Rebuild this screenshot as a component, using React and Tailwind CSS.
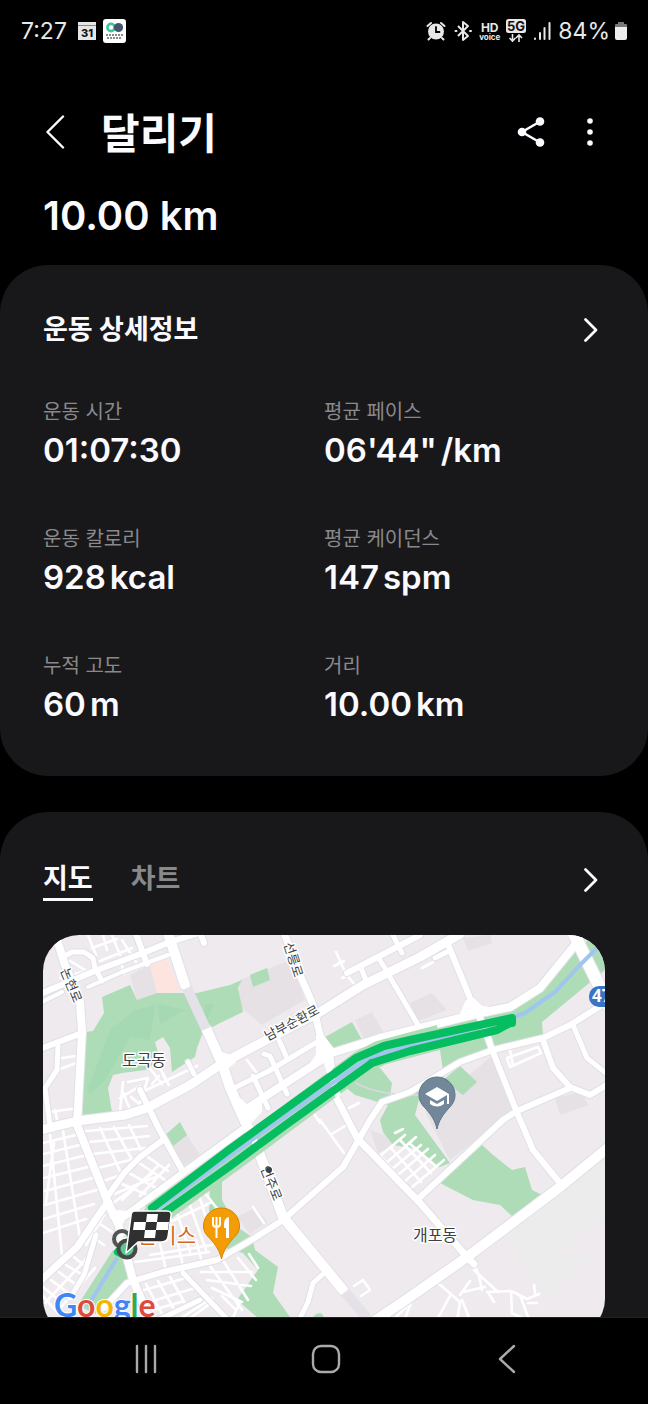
import { useState } from 'react';

const STATS = [
  { label: '운동 시간', value: '01:07:30', unit: '' },
  { label: '평균 페이스', value: '06\'44"', unit: '/km' },
  { label: '운동 칼로리', value: '928', unit: 'kcal' },
  { label: '평균 케이던스', value: '147', unit: 'spm' },
  { label: '누적 고도', value: '60', unit: 'm' },
  { label: '거리', value: '10.00', unit: 'km' },
];

// [stroke width, points]
const ROADS = [
  [8, '54,930 65,965 80,1002 82,1032 77,1125 107,1200 118,1223 133,1280 150,1320'],
  [6, '40,994 97,970 143,953 170,942 205,931'],
  [5, '63,957 72,952 84,952 93,958 95,968 102,981'],
  [6, '136,934 147,964'],
  [4, '88,987 122,972 168,955'],
  [4, '40,1003 62,992'],
  [10, '167,930 185,985'],
  [10, '207,1030 223,1066 229,1085 242,1115 257,1147 283,1217 343,1290'],
  [9, '40,1130 77,1121 125,1115 147,1108 190,1085 223,1063 270,1038 320,1012 363,985 420,957 460,934'],
  [6, '347,973 420,935'],
  [5, '361,968 366,980'],
  [5, '378,957 386,970'],
  [5, '393,935 402,953'],
  [7, '283,930 300,975 313,1005 320,1035 330,1058 335,1095 357,1138 420,1203 467,1257 474,1264'],
  [8, '242,1112 275,1090 303,1072 332,1053 380,1038 420,1028 460,1018 490,1011 510,1007 540,988 575,945'],
  [7, '242,1130 183,1173 125,1216 113,1216'],
  [6, '107,1197 125,1172 140,1157 163,1140'],
  [6, '140,1090 158,1127 182,1170'],
  [7, '107,1203 77,1247 40,1281'],
  [5, '96,1235 84,1275 70,1298'],
  [6, '104,1308 127,1283 163,1272 217,1260 253,1239 283,1220 343,1167 370,1120 382,1102 410,1092 460,1062 493,1050 543,1038 570,1025 610,1000'],
  [6, '447,942 470,998 483,1025 493,1052 518,1115 533,1150 560,1183'],
  [6, '543,1040 553,1068 570,1087 590,1095 610,1083'],
  [6, '570,1088 517,1111 503,1120 417,1200'],
  [5, '573,1025 587,1058 612,1078'],
  [12, '572,930 610,1008'],
  [10, '610,1146 560,1187 467,1257 410,1297 373,1322'],
  [5, '322,1275 313,1283 308,1302 298,1322'],
  [5, '183,1273 230,1322'],
  [5, '158,1320 200,1300'],
  [5, '279,1040 286,1056'],
  [5, '234,1088 267,1072 317,1042'],
  [5, '264,1054 270,1056 287,1094'],
  [5, '253,1076 268,1108'],
  [5, '387,972 418,1025'],
  [6, '40,1049 82,1033'],
  [5, '58,1046 57,1070 45,1088 50,1125'],
  [6, '200,932 204,943'],
  [5, '188,1062 194,1074'],
  [5, '435,958 447,952'],
];

const LANES = [
  // north west blocks
  'M88 935l8 20M103 935l4 15M92 948l25-9M100 961l32-13M112 935l8 20M70 961l15 9M60 978l30-8M122 940l14 22M121 962l3 12',
  'M57 1070l22 -8M49 1112l30-4M55 1110l3 14M62 1058l20-3',
  // below the park
  'M123 1082l-3 30M128 1082l20-4M120 1098l20-12M130 1110l-7-18M148 1078l-10 32M148 1066l14 18M152 1084l7-8M140 1093l57-27M163 1075l6 10M158 1065l8 14M131 1097l12 10',
  // left grid, around the boulevard
  'M43 1143l37-9M43 1154l41-10M43 1166l44-11M44 1178l48-12M45 1191l51-14M45 1205l55-16M44 1219l50-15M43 1233l43-14M50 1135l12 120M63 1131l17 107M54 1142l-8 60',
  'M86 1131l61-5M89 1142l60-6M93 1154l52-6M98 1168l36-9M103 1181l18-6M100 1128l20 43M114 1127l17 31M129 1125l12 25',
  'M114 1194l44-18M120 1183l34 15M129 1173l29 16M139 1163l26 17M148 1157l20 14M122 1200l36-34M112 1204l40-30M140 1196l29-31',
  'M43 1287l17 14M51 1280l20 15M59 1272l20 15M66 1265l15 9M74 1257l12 10M45 1303l45-48M57 1312l38-44M43 1296l15 17',
  'M104 1215l-18 30M97 1222l15 10M89 1234l15 11',
  // around the restaurant pin
  'M162 1216l38-26M170 1222l42-20M176 1210l14 42M188 1200l18 50M198 1192l16 52M150 1255l62-10M135 1262l74-10M160 1244l6 26M178 1244l6 26M196 1240l6 22M205 1193l14 18',
  'M137 1292l49-14M143 1304l52-16M146 1284l16 30M158 1281l17 30M170 1277l17 30M150 1311l34-10M178 1320l34-22M188 1320l20-15',
  'M201 1272l51 0M207 1280l44 6M212 1288l30 14M222 1296l14 14M210 1266l32 44M224 1262l24 38M238 1258l18 22M249 1254l9 14M232 1320l8-18',
  // east side of the avenue
  'M380 1156l25-21M386 1163l26-22M392 1169l29-24M398 1175l30-26M404 1182l31-27M411 1188l33-28M382 1158l31 34M391 1148l30 34M400 1140l31 33M409 1143l28 24M395 1133l8-4M407 1145l9-8',
  'M354 1286l9-6 7 10-9 6M253 1207l11 16M320 1120l24 33M332 1134l13-8M240 1083l12-5M247 1060l9 12',
  'M438 1283l22 19-3 20M451 1294l-14 26M460 1295l10-14M463 1292l22-5M474 1263l5 13 3 14M474 1270l24 22M487 1292l24-1 16 8 12-5M511 1291l1 22 10 5M520 1295l8 22M488 1292l6 10M528 1303l9 0M534 1285l1 8M462 1300l8 20',
  'M422 968l11-6M336 952l10 22 8 10M334 966l10-5M342 978l8-4M507 1058l31-11 3 6-31 14zM510 1050l3 16M310 1107l10 16M349 1108l10-5M395 1318l12-12M412 1300l-6 16',
];

const LETTERS = [
  ['G', '#4285f4'],
  ['o', '#dd4b3e'],
  ['o', '#f4b400'],
  ['g', '#4285f4'],
  ['l', '#34a853'],
  ['e', '#dd4b3e'],
];

function Chevron({ className }) {
  return (
    <svg viewBox="0 0 16 26" fill="none" stroke="currentColor" strokeWidth="2.8" strokeLinecap="round" strokeLinejoin="round" className={className}>
      <path d="M2.5 2.5 13 13 2.5 23.5" />
    </svg>
  );
}

function StatusBar() {
  return (
    <div className="flex h-[62px] items-center justify-between pl-[21px] pr-5 text-[#e8e8e8]">
      <div className="flex items-center gap-2">
        <span className="text-[23px]">7:27</span>
        <svg width="22" height="20" viewBox="0 0 22 20" className="ml-px">
          <path fill="#e6e6e6" d="M2 1h18v3H2zM2 5h18v14H2z" />
          <path fill="#888" d="M2 4h18v1H2z" />
          <text x="11" y="16" textAnchor="middle" fontSize="11" fontWeight="800" fill="#111">31</text>
        </svg>
        <svg width="24" height="24" viewBox="0 0 24 24" className="-ml-1">
          <rect x="1" width="23" height="24" rx="3" fill="#fff" />
          <circle cx="9" cy="8.500" r="3.600" fill="none" stroke="#3cc79a" strokeWidth="2.600" />
          <circle cx="16.500" cy="8.500" r="4.600" fill="#44566a" />
          <path stroke="#666" strokeWidth="1.500" strokeDasharray="2 1" d="M4 16h17M5 19h15" />
        </svg>
      </div>
      <div className="flex items-center gap-1">
        <svg width="22" height="22" viewBox="0 0 22 22" fill="none" stroke="currentColor" strokeWidth="2" strokeLinecap="round">
          <circle cx="11" cy="11.500" r="8" fill="currentColor" stroke="none" />
          <path d="M2.500 6 6 3M19.500 6 16 3M5 18l-1.500 1.500M17 18l1.500 1.500" />
          <path stroke="#000" strokeWidth="1.800" d="M11 7v5h3.500" />
        </svg>
        <svg width="22" height="22" viewBox="0 0 22 22" fill="none" stroke="currentColor" strokeWidth="2" strokeLinejoin="round" className="mx-px">
          <path d="m6 6 10 10-5 4V2l5 4L6 16" />
          <path strokeLinecap="round" d="M3.500 11h1M18 11h1" />
        </svg>
        <span className="flex flex-col items-center font-bold">
          <span className="text-[12px] leading-[11px]">HD</span>
          <span className="text-[8px] leading-[8px]">voice</span>
        </span>
        <svg width="22" height="24" viewBox="0 0 22 24" fill="none" stroke="currentColor" className="mx-px">
          <rect x="1" y="0" width="20" height="14" rx="2.500" fill="currentColor" stroke="none" />
          <text x="11" y="12" textAnchor="middle" fontSize="13" fontWeight="700" fill="#111" stroke="none">5G</text>
          <path strokeWidth="1.600" d="M7.500 15v7M4.500 19l3 3 3-3M14 23v-7M11 19l3-3 3 3" />
        </svg>
        <svg width="20" height="20" viewBox="0 0 20 20" stroke="currentColor" strokeWidth="2" strokeLinecap="round">
          <path d="M3 18v-.500M8 18v-6M12.500 18V7M17.500 18V2" />
        </svg>
        <span className="ml-0.5 text-[23px]">84%</span>
        <svg width="14" height="20" viewBox="0 0 14 20">
          <path fill="#777" d="M4 1h6v2h2q1 0 1 1v3H1V4q0-1 1-1h2z" />
          <path fill="#eee" d="M1 6h12v11q0 2-2 2H3q-2 0-2-2z" />
        </svg>
      </div>
    </div>
  );
}

function RouteMap() {
  return (
    <svg viewBox="43 935 562 400" className="block w-full rounded-[36px]" role="img" aria-label="지도">
      <rect x="43" y="935" width="562" height="400" fill="#eeeaee" />

      <g fill="#e5e1e5">
        <path d="M130 975 150 965 157 993 137 1000ZM240 980 290 960 305 1000 262 1025 238 1005ZM355 1020 372 1012 385 1035 365 1042ZM463 938 490 935 492 943 468 951ZM410 1003 432 993 447 1010 415 1022ZM425 1112 493 1055 515 1110 450 1160ZM555 1098 582 1092 588 1105 560 1115ZM237 1217 255 1208 268 1222 250 1234ZM172 1147 187 1135 200 1155 184 1165ZM370 1130 385 1135 395 1145 378 1153Z" />
        <path fill="#ececec" d="M508 1240 560 1180 605 1150V1215L560 1255 590 1255 545 1300Z" />
      </g>
      <path fill="#fde4df" d="m150 965 17-8 13 35-23 1z" />
      <g fill="#addcb7">
        <path d="M85 1032 93 1031 104 1013 102 997 130 985 137 1000 157 993 197 993 230 985 242 980 238 988 243 1012 220 1023 203 1032 197 1048 195 1057 172 1072 170 1048 163 1037 155 1042 160 1060 145 1070 122 1073 113 1075 108 1088 112 1113 82 1118Z" />
        <path d="m250 975 17-7 3 12-17 7zM325 1037 352 1022 362 1040 343 1051 333 1048Z" />
        <path d="M575 947 600 935 605 970 565 1003 542 1022 543 1035 493 1048 460 1062 443 1070 440 1050 410 1053V1033L513 1008 541 990Z" />
        <path d="M343 1085 372 1066 380 1068 392 1083 390 1096 422 1088 415 1115 450 1163 437 1168 413 1148 393 1145 383 1132 380 1120 388 1105 355 1095Z" />
        <path d="m460 1066 17 16-14 13-20-15zM482 1145 493 1155 512 1170 525 1167 532 1190 542 1195 555 1185 513 1217 500 1205 473 1200 440 1183Z" />
        <path d="m163 1137 17-15 7 13-15 12zM210 1190 222 1180 222 1200 237 1227 252 1237 255 1250 278 1267 273 1293 290 1317 257 1317 237 1300 258 1270 243 1253 215 1245 209 1210Z" />
        <path d="M113 1250 128 1250 128 1278 95 1314 78 1305ZM316 1314q8-3 8 6h-14z" />
      </g>
      <path fill="#a4d9b4" d="M88 1090 110 1030 135 1010 155 1005 150 1040 130 1037 105 1080 90 1095ZM158 1004 185 1010 160 1024ZM205 1005 214 1003 205 1025Z" />

      <g fill="none" stroke="#fff" strokeWidth="2.600" strokeLinecap="round" strokeLinejoin="round">
        {LANES.map((d) => (
          <path key={d} d={d} />
        ))}
      </g>
      <path stroke="#d8d8e0" strokeWidth="2" fill="none" d="M350 1080q20 12 45 14l25 1" />

      {/* casing first, so that the junctions stay open */}
      <g fill="none" stroke="#e0e0e7" strokeLinecap="round" strokeLinejoin="round">
        {ROADS.map(([w, points]) => (
          <polyline key={points} points={points} strokeWidth={w + 2} />
        ))}
      </g>
      <g fill="none" stroke="#fff" strokeLinecap="round" strokeLinejoin="round">
        {ROADS.map(([w, points]) => (
          <polyline key={points} points={points} strokeWidth={w} />
        ))}
      </g>
      <path fill="#fff" d="M316 1035 325 1037 336 1051 320 1062 303 1072 316 1055ZM466 1000 474 998 482 1006 500 1008 470 1016 458 1018ZM222 1052 234 1056 236 1062 224 1072ZM237 1095 252 1109 262 1103 262 1112 245 1130ZM103 1203 115 1210 130 1211 118 1232Z" />
      <path stroke="#e5e1e8" strokeWidth="10" fill="none" d="m187 988 19 41M345 1292l22 26" />

      <path stroke="#addcb7" strokeWidth="25" fill="none" strokeLinejoin="round" d="M153 1216 235 1157 361 1063 380 1053 440 1037" />
      <path fill="#addcb7" d="M147 1206 122 1238 140 1234 164 1216Z" />
      <g fill="none" stroke="#fff" strokeWidth="6">
        <path d="m476 1008 14 34M246 1120l12 30M326 1060l12 36" />
      </g>
      <path stroke="#a0c5ee" strokeWidth="4" fill="none" strokeLinejoin="round" d="M602 943 580 965 555 992 525 1013 500 1022 410 1046 380 1054 361 1063 260 1134 156 1210M117 1258l-29 48" />
      <g fill="none" stroke="#07bd62" strokeWidth="8" strokeLinejoin="round" strokeLinecap="round">
        <path d="M512 1018 410 1040 384 1046 356 1058 263 1125 230 1149 152 1208M512 1022 497 1030 410 1051 372 1063 287 1124 230 1166 158 1217M512 1018v5M118 1252l4 2" />
      </g>
      <path fill="#07bd62" d="m366 1064 8 3-4-8z" />

      <g fontFamily="Noto Sans CJK KR, sans-serif" fill="#3c4043" stroke="#fff" strokeWidth="3" strokeLinejoin="round" paintOrder="stroke" textAnchor="middle">
        <g fontSize="16">
          <text x="144" y="1066">도곡동</text>
          <text x="435" y="1241">개포동</text>
        </g>
        <g fontSize="13">
          <text transform="translate(67 987) rotate(68)">논현로</text>
          <text transform="translate(289 961) rotate(72)">선릉로</text>
          <text transform="translate(294 1027) rotate(-28)">남부순환로</text>
          <text transform="translate(267 1185) rotate(68)">언주로</text>
        </g>
        <text x="196" y="1243" textAnchor="end" fontSize="21" fill="#d2691e">은이스</text>
      </g>
      <circle cx="269" cy="1170" r="3" fill="#3c4043" />

      {/* school pin */}
      <path fill="#72889a" stroke="#5f7687" strokeWidth="1" d="M437 1129c-2-9-6-14-11-20-4-4-7-8-7-14a18 18 0 0 1 36 0c0 6-3 10-7 14-5 6-9 11-11 20z" />
      <path fill="#fff" d="m425 1094 12-7 12 7v10h-2v-9l-10 6zM430 1100l7 4 7-4v4q-7 5-14 0z" />

      {/* restaurant pin */}
      <path fill="#f39c05" stroke="#d98200" strokeWidth="1" d="M221.500 1259c-2-9-6-14-11-20-4-4-7-7-7-13a18 18 0 0 1 36 0c0 6-3 9-7 13-5 6-9 11-11 20z" />
      <path fill="none" stroke="#fff" strokeWidth="2" d="M213 1217v7q0 3 3.500 3t3.500-3v-7M216.500 1217v21" />
      <path fill="#fff" d="M224 1224q0-6 5-7v21h-3v-10h-2z" />

      {/* start and finish */}
      <circle cx="122" cy="1239" r="8" fill="#fff" fillOpacity=".5" stroke="#555" strokeWidth="4" />
      <circle cx="127" cy="1249" r="8.500" fill="#5cc894" stroke="#484848" strokeWidth="4" />
      <path fill="#303030" stroke="#fff" strokeWidth="1.500" strokeLinejoin="round" d="M135 1211h32q5 0 4 5l-3 21q-1 5-6 5h-24l-12 11 5-37q0-5 4-5z" />
      <path fill="#fff" d="M147 1214h11l-1 8h-11zM134 1222h12l-1 8h-12zM157 1222h12l-1 8h-12zM145 1230h11l-1 8h-11z" />

      <rect x="589" y="986" width="30" height="21" rx="10" fill="#3a75c4" />
      <text x="592" y="1002" fontFamily="Open Sans, sans-serif" fontSize="17" fontWeight="700" fill="#fff">47</text>

      <text x="54" y="1317" fontFamily="Lato, sans-serif" fontSize="32" fontWeight="700" stroke="#fff" strokeWidth="2" paintOrder="stroke">
        {LETTERS.map(([letter, color], i) => (
          <tspan key={i} fill={color}>{letter}</tspan>
        ))}
      </text>
    </svg>
  );
}

export default function App() {
  const [tab, setTab] = useState('지도');

  return (
    <div className="flex h-dvh flex-col bg-black font-['Inter','Noto_Sans_CJK_KR',sans-serif] text-[#fafaff]">
      <main className="min-h-0 flex-1 overflow-y-auto [scrollbar-width:none]">
        <StatusBar />

        <header className="px-[43px] pt-10">
          <div className="flex h-[60px] items-center">
            <button aria-label="뒤로" className="mr-9 pl-0.5">
              <svg width="20" height="34" viewBox="0 0 20 34" fill="none" stroke="currentColor" strokeWidth="2.400" strokeLinecap="round" strokeLinejoin="round">
                <path d="M18 1.500 2.500 17 18 32.500" />
              </svg>
            </button>
            <h1 className="pt-1 text-[42px] font-bold leading-[60px]">달리기</h1>
            <button aria-label="공유" className="ml-auto">
              <svg width="28" height="32" viewBox="0 0 28 32" fill="currentColor">
                <path fill="none" stroke="currentColor" strokeWidth="2.500" d="M23 5.500 5 16l18 10.500" />
                <circle cx="5" cy="16" r="4.300" />
                <circle cx="23" cy="5.500" r="4.300" />
                <circle cx="23" cy="26.500" r="4.300" />
              </svg>
            </button>
            <button aria-label="더보기" className="ml-[38px] mr-2">
              <svg width="14" height="32" viewBox="0 0 14 32" fill="currentColor">
                <circle cx="7" cy="5" r="2.800" />
                <circle cx="7" cy="16" r="2.800" />
                <circle cx="7" cy="27" r="2.800" />
              </svg>
            </button>
          </div>
          <p className="mt-6 text-[40px] font-semibold leading-[60px]">10.00 km</p>
        </header>

        <section className="mt-[19px] rounded-[48px] bg-[#18181a] px-[43px] pb-[50px] pt-[45px]">
          <div className="flex items-center justify-between">
            <h2 className="text-[27px] font-bold leading-10">운동 상세정보</h2>
            <button aria-label="운동 상세정보 보기" className="pr-1.5">
              <Chevron className="h-[26px] w-4" />
            </button>
          </div>
          <dl className="mt-12 grid grid-cols-2 gap-y-[53px]">
            {STATS.map((s) => (
              <div key={s.label}>
                <dt className="text-xl leading-7 text-[#89898c]">{s.label}</dt>
                <dd className="mt-0.5 flex gap-1 text-[33px] font-semibold leading-[44px]">
                  <span>{s.value}</span>
                  {s.unit && <span>{s.unit}</span>}
                </dd>
              </div>
            ))}
          </dl>
        </section>

        <section className="mt-9 rounded-t-[48px] bg-[#18181a] px-[43px] pb-12 pt-[47px]">
          <div className="flex items-center justify-between">
            <div role="tablist" className="flex gap-[38px]">
              {['지도', '차트'].map((name) => (
                <button
                  key={name}
                  role="tab"
                  aria-selected={tab === name}
                  onClick={() => setTab(name)}
                  className={`h-[42px] border-b-[3px] text-[27px] font-bold leading-10 ${tab === name ? 'border-[#fafaff]' : 'border-transparent text-[#89898c]'}`}
                >
                  {name}
                </button>
              ))}
            </div>
            <button aria-label="지도 보기" className="pr-1.5">
              <Chevron className="h-[26px] w-4" />
            </button>
          </div>
          <div className="mt-[34px]">
            <RouteMap />
          </div>
        </section>
      </main>

      <nav className="grid h-[87px] shrink-0 grid-cols-3 items-center border-t border-[#222] pb-1 pl-14 pr-[52px] text-[#aaa]">
        <button aria-label="최근 앱" className="justify-self-center">
          <svg width="28" height="30" viewBox="0 0 28 30" stroke="currentColor" strokeWidth="2.400" strokeLinecap="round">
            <path d="M5 2v26M14 2v26M23 2v26" />
          </svg>
        </button>
        <button aria-label="홈" className="justify-self-center">
          <svg width="30" height="30" viewBox="0 0 30 30" fill="none" stroke="currentColor" strokeWidth="2.400">
            <rect x="2" y="2" width="26" height="26" rx="8" />
          </svg>
        </button>
        <button aria-label="이전" className="justify-self-center">
          <svg width="20" height="30" viewBox="0 0 20 30" fill="none" stroke="currentColor" strokeWidth="2.400" strokeLinecap="round" strokeLinejoin="round">
            <path d="M18 2 4 15l14 13" />
          </svg>
        </button>
      </nav>
    </div>
  );
}
